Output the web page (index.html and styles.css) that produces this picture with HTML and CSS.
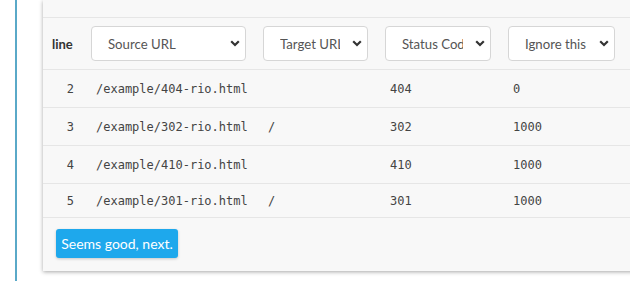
FILE: index.html
```html
<!DOCTYPE html>
<html>
<head>
<meta charset="utf-8">
<link rel="stylesheet" href="styles.css">
</head>
<body>
<div class="layout">
  <div class="rail">
    <div class="card">
      <div class="card-top"></div>
      <div class="grid head">
        <div class="cell line-h">line</div>
        <div class="cell"><div class="select w-src"><span class="label">Source URL</span><svg class="chev" viewBox="0 0 10 7" width="10" height="7"><path d="M1.2 1.2 L5 5 L8.8 1.2" fill="none" stroke="#333" stroke-width="2.2"/></svg></div></div>
        <div class="cell"><div class="select w-tgt"><span class="label">Target URL</span><svg class="chev" viewBox="0 0 10 7" width="10" height="7"><path d="M1.2 1.2 L5 5 L8.8 1.2" fill="none" stroke="#333" stroke-width="2.2"/></svg></div></div>
        <div class="cell"><div class="select w-st"><span class="label">Status Code</span><svg class="chev" viewBox="0 0 10 7" width="10" height="7"><path d="M1.2 1.2 L5 5 L8.8 1.2" fill="none" stroke="#333" stroke-width="2.2"/></svg></div></div>
        <div class="cell"><div class="select w-ig"><span class="label">Ignore this</span><svg class="chev" viewBox="0 0 10 7" width="10" height="7"><path d="M1.2 1.2 L5 5 L8.8 1.2" fill="none" stroke="#333" stroke-width="2.2"/></svg></div></div>
      </div>
      <div class="grid row">
        <div class="cell num">2</div><div class="cell data">/example/404-rio.html</div><div class="cell data"></div><div class="cell data">404</div><div class="cell data">0</div>
      </div>
      <div class="grid row">
        <div class="cell num">3</div><div class="cell data">/example/302-rio.html</div><div class="cell data">/</div><div class="cell data">302</div><div class="cell data">1000</div>
      </div>
      <div class="grid row">
        <div class="cell num">4</div><div class="cell data">/example/410-rio.html</div><div class="cell data"></div><div class="cell data">410</div><div class="cell data">1000</div>
      </div>
      <div class="grid row last">
        <div class="cell num">5</div><div class="cell data">/example/301-rio.html</div><div class="cell data">/</div><div class="cell data">301</div><div class="cell data">1000</div>
      </div>
      <div class="actions">
        <button class="btn">Seems good, next.</button>
      </div>
    </div>
  </div>
</div>
</body>
</html>
```
FILE: styles.css
```css
html, body {
  margin: 0;
  padding: 0;
  background: #ffffff;
  overflow: hidden;
  height: 100%;
}
body {
  font-family: Lato, "Open Sans", sans-serif;
}
.layout {
  padding-left: 15px;
  height: 100%;
}
.rail {
  border-left: 2px solid #5aa9c8;
  height: 100%;
  padding-left: 26px;
  box-sizing: border-box;
}
.card {
  width: 640px;
  background: #f8f8f8;
  box-shadow: 0 1px 4px rgba(0,0,0,0.35);
}
.card-top {
  height: 17px;
  border-bottom: 1px solid #e6e6e6;
}
.grid {
  display: grid;
  grid-template-columns: 39px 172px 122px 123px 140px;
  padding-left: 9px;
  align-items: center;
  border-bottom: 1px solid #e6e6e6;
}
.head {
  height: 52px;
  box-sizing: border-box;
}
.row {
  height: 38px;
  box-sizing: border-box;
}
.row.last {
  height: 34px;
}
.line-h {
  font-weight: bold;
  font-size: 13px;
  color: #333;
}
.select {
  height: 35px;
  box-sizing: border-box;
  border: 1px solid #d6d6d6;
  border-radius: 4px;
  background: #fff;
  display: flex;
  align-items: center;
  padding-left: 16px;
  padding-right: 5px;
  font-size: 13.2px;
  color: #555;
}
.label {
  flex: 1;
  overflow: hidden;
  white-space: nowrap;
  margin-right: 12px;
}
.chev {
  flex: none;
}
.w-src { width: 155px; }
.w-tgt { width: 105px; }
.w-st { width: 106px; }
.w-ig { width: 107px; }
.num {
  font-family: "DejaVu Sans Mono", monospace;
  font-size: 12px;
  color: #444;
  text-align: right;
  padding-right: 17px;
}
.data {
  font-family: "DejaVu Sans Mono", monospace;
  font-size: 12px;
  color: #444;
  padding-left: 5px;
  white-space: nowrap;
}
.actions {
  padding: 11px 0 13px 13px;
}
.btn {
  font-family: Lato, "Open Sans", sans-serif;
  font-size: 14px;
  color: #fff;
  background: #1ea8ec;
  border: none;
  border-radius: 3px;
  height: 29px;
  width: 122px;
  padding: 0;
  box-shadow: 0 1px 3px rgba(0,0,0,0.2);
  display: block;
}
```
